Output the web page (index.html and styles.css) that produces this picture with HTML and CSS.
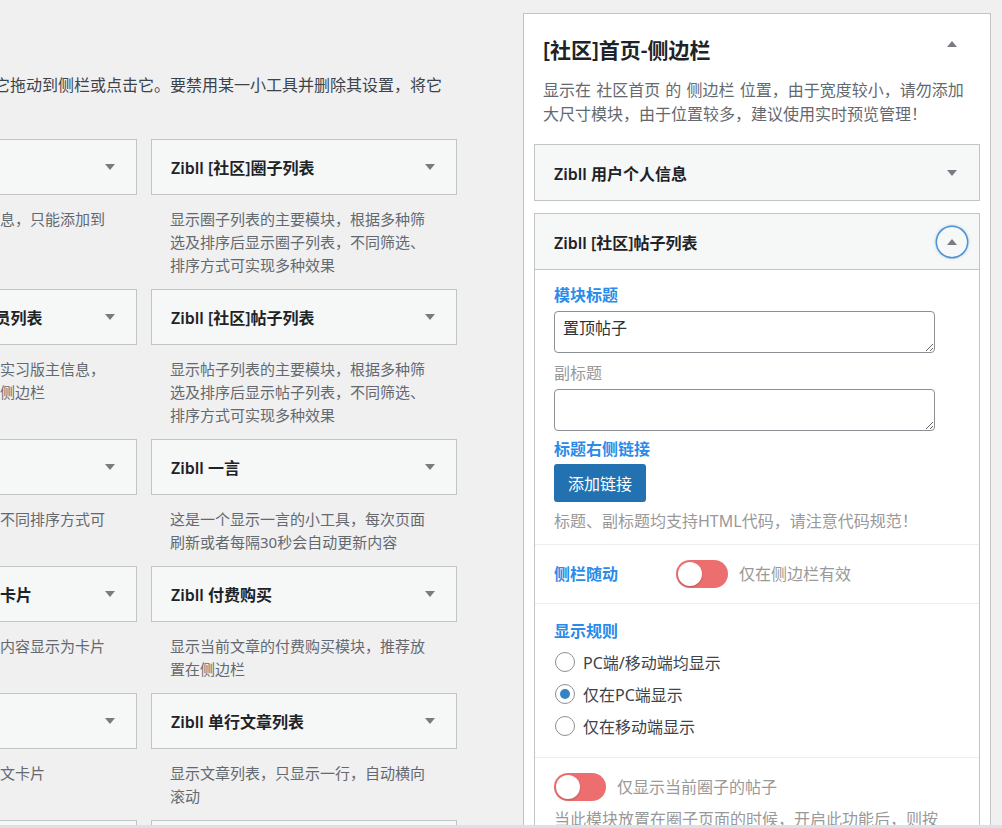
FILE: index.html
```html
<html>
  <head>
    <link rel="stylesheet" href="styles.css">
  </head>

  <body>
    <div class="page">
      <div class="widgets-left">
        <p class="intro">要启用小工具，请将它拖动到侧栏或点击它。要禁用某一小工具并删除其设置，将它拖回来。</p>

        <div class="widget-grid">
          <div class="widget">
            <div class="widget-top"><h3>Zibll 用户信息</h3><span class="arrow"></span></div>
            <p class="widget-desc">显示当前用户的个人信息，只能添加到侧边栏</p>
          </div>
          <div class="widget">
            <div class="widget-top"><h3>Zibll [社区]圈子列表</h3><span class="arrow"></span></div>
            <p class="widget-desc">显示圈子列表的主要模块，根据多种筛选及排序后显示圈子列表，不同筛选、排序方式可实现多种效果</p>
          </div>

          <div class="widget">
            <div class="widget-top"><h3>Zibll [社区]版主及成员列表</h3><span class="arrow"></span></div>
            <p class="widget-desc">显示圈主、分区版主、实习版主信息，建议放置在圈子页面的侧边栏</p>
          </div>
          <div class="widget">
            <div class="widget-top"><h3>Zibll [社区]帖子列表</h3><span class="arrow"></span></div>
            <p class="widget-desc">显示帖子列表的主要模块，根据多种筛选及排序后显示帖子列表，不同筛选、排序方式可实现多种效果</p>
          </div>

          <div class="widget">
            <div class="widget-top"><h3>Zibll 文章列表</h3><span class="arrow"></span></div>
            <p class="widget-desc">显示文章列表的模块，不同排序方式可实现多种效果</p>
          </div>
          <div class="widget">
            <div class="widget-top"><h3>Zibll 一言</h3><span class="arrow"></span></div>
            <p class="widget-desc">这是一个显示一言的小工具，每次页面刷新或者每隔30秒会自动更新内容</p>
          </div>

          <div class="widget">
            <div class="widget-top"><h3>Zibll 显示文章为图文卡片</h3><span class="arrow"></span></div>
            <p class="widget-desc">将指定的文章或页面的内容显示为卡片</p>
          </div>
          <div class="widget">
            <div class="widget-top"><h3>Zibll 付费购买</h3><span class="arrow"></span></div>
            <p class="widget-desc">显示当前文章的付费购买模块，推荐放置在侧边栏</p>
          </div>

          <div class="widget">
            <div class="widget-top"><h3>Zibll 图文卡片</h3><span class="arrow"></span></div>
            <p class="widget-desc">显示一篇指定文章为图文卡片</p>
          </div>
          <div class="widget">
            <div class="widget-top"><h3>Zibll 单行文章列表</h3><span class="arrow"></span></div>
            <p class="widget-desc">显示文章列表，只显示一行，自动横向滚动</p>
          </div>

          <div class="widget">
            <div class="widget-top"><h3>Zibll 幻灯片</h3><span class="arrow"></span></div>
          </div>
          <div class="widget">
            <div class="widget-top"><h3>Zibll 文章轮播</h3><span class="arrow"></span></div>
          </div>
        </div>
      </div>

      <div class="sidebar-panel">
        <div class="panel-head">
          <h2>[社区]首页-侧边栏</h2>
          <span class="toggle-btn"><span class="arrow up"></span></span>
        </div>
        <p class="panel-desc">显示在 社区首页 的 侧边栏 位置，由于宽度较小，请勿添加大尺寸模块，由于位置较多，建议使用实时预览管理！</p>

        <div class="widget in-sidebar">
          <div class="widget-top">
            <h3>Zibll 用户个人信息</h3>
            <span class="toggle-btn"><span class="arrow"></span></span>
          </div>
        </div>

        <div class="widget in-sidebar open">
          <div class="widget-top">
            <h3>Zibll [社区]帖子列表</h3>
            <span class="toggle-btn focus"><span class="arrow up"></span></span>
          </div>
          <div class="widget-inside">
            <div class="field">
              <div class="field-title">模块标题</div>
              <textarea class="text-input">置顶帖子</textarea>
              <div class="sub-title">副标题</div>
              <textarea class="text-input"></textarea>
              <div class="field-title link-title">标题右侧链接</div>
              <button class="button-primary">添加链接</button>
              <p class="field-help">标题、副标题均支持HTML代码，请注意代码规范！</p>
            </div>

            <div class="field field-inline">
              <div class="field-title">侧栏随动</div>
              <span class="switch"></span>
              <span class="switch-text">仅在侧边栏有效</span>
            </div>

            <div class="field">
              <div class="field-title">显示规则</div>
              <label class="radio-row"><input type="radio" name="show_type">PC端/移动端均显示</label>
              <label class="radio-row"><input type="radio" name="show_type" checked>仅在PC端显示</label>
              <label class="radio-row"><input type="radio" name="show_type">仅在移动端显示</label>
            </div>

            <div class="field">
              <div class="switch-row">
                <span class="switch"></span>
                <span class="switch-text">仅显示当前圈子的帖子</span>
              </div>
              <p class="field-help">当此模块放置在圈子页面的时候，开启此功能后，则按照当前所在的圈子显示帖子</p>
            </div>
          </div>
        </div>
      </div>
    </div>

    <div class="scroll-edge"></div>
  </body>
</html>
```

FILE: styles.css
```css
/* general styling */
* {
  box-sizing: border-box;
  margin: 0;
  padding: 0;
}

html,
body {
  height: 100%;
}

body {
  background-color: #f0f0f1;
  color: #3c434a;
  font-family: "Noto Sans", "Noto Sans CJK SC", sans-serif;
  overflow: hidden;
}

.page {
  align-items: flex-start;
  display: flex;
  gap: 66px;
}

/* available widgets */
.widgets-left {
  flex: none;
  margin-left: -169px;
  padding-top: 73px;
  width: 626px;
}

.intro {
  font-size: 16px;
  line-height: 24px;
  margin-bottom: 18px;
  padding-left: 19px;
}

.widget-grid {
  column-gap: 14px;
  display: grid;
  grid-template-columns: 306px 306px;
}

.widget-top {
  align-items: center;
  background-color: #f6f7f7;
  border: 1px solid #c3c4c7;
  display: flex;
  height: 56px;
  justify-content: space-between;
  padding: 0 21px 0 19px;
}

.widget-top h3 {
  color: #1d2327;
  font-size: 16px;
  font-weight: 600;
  white-space: nowrap;
}

.arrow {
  border-left: 5px solid transparent;
  border-right: 5px solid transparent;
  border-top: 6px solid #787c82;
  height: 0;
  width: 0;
}

.arrow.up {
  border-bottom: 6px solid #787c82;
  border-top: 0;
}

.widget-desc {
  color: #646970;
  font-size: 15px;
  line-height: 23px;
  padding: 13px 20px 12px 19px;
}

/* sidebar */
.sidebar-panel {
  background-color: #fff;
  border: 1px solid #c3c4c7;
  flex: none;
  margin-top: 13px;
  padding: 0 10px;
  width: 468px;
}

.panel-head {
  align-items: flex-start;
  display: flex;
  justify-content: space-between;
  padding: 22px 13px 0 9px;
}

.panel-head h2 {
  color: #1d2327;
  font-size: 21px;
  font-weight: 600;
  line-height: 28px;
}

.panel-head .toggle-btn {
  margin-top: -7px;
}

.toggle-btn {
  align-items: center;
  border-radius: 50%;
  display: flex;
  height: 30px;
  justify-content: center;
  width: 30px;
}

.toggle-btn.focus {
  box-shadow: 0 0 0 1.5px #4f94d4, 0 0 3px 1px rgba(79, 148, 212, 0.6);
}

.panel-desc {
  color: #646970;
  font-size: 16px;
  line-height: 24px;
  margin: 14px 10px 18px 9px;
  word-spacing: 1px;
}

.widget.in-sidebar {
  border: 1px solid #c3c4c7;
  margin-bottom: 12px;
}

.in-sidebar .widget-top {
  border: 0;
  height: 55px;
  padding: 0 12px 0 19px;
}

.widget-inside {
  border-top: 1px solid #c3c4c7;
}

/* form fields */
.field {
  padding: 13px 20px 11px 19px;
}

.field + .field {
  border-top: 1px solid #eee;
  padding-bottom: 15px;
  padding-top: 15px;
}

.field-title {
  color: #2a8be8;
  font-size: 16px;
  font-weight: 600;
  line-height: 24px;
}

.sub-title {
  color: #999;
  font-size: 16px;
  line-height: 24px;
  margin-top: 8px;
}

.text-input {
  border: 1px solid #8c8f94;
  border-radius: 4px;
  color: #2c3338;
  display: block;
  font-family: inherit;
  font-size: 16px;
  height: 42px;
  line-height: 24px;
  margin-top: 4px;
  padding: 4px 8px;
  width: 94%;
}

.link-title {
  margin-top: 6px;
}

.button-primary {
  background-color: #2271b1;
  border: 0;
  border-radius: 3px;
  color: #fff;
  font-family: inherit;
  font-size: 16px;
  height: 38px;
  margin-top: 3px;
  padding: 0 14px;
}

.field-help {
  color: #999;
  font-size: 16px;
  line-height: 24px;
  margin-top: 7px;
}

.field-inline {
  align-items: center;
  display: flex;
}

.field-inline .field-title {
  width: 122px;
}

.switch {
  background-color: #ec6e6e;
  border-radius: 14px;
  display: inline-block;
  flex: none;
  height: 28px;
  position: relative;
  width: 52px;
}

.switch::after {
  background-color: #fff;
  border-radius: 50%;
  box-shadow: 0 1px 2px rgba(0, 0, 0, 0.2);
  content: "";
  height: 24px;
  left: 2px;
  position: absolute;
  top: 2px;
  width: 24px;
}

.switch-text {
  color: #999;
  font-size: 16px;
  line-height: 24px;
  margin-left: 11px;
}

.switch-row {
  align-items: center;
  display: flex;
}

.switch-row + .field-help {
  margin-right: 10px;
  margin-top: 6px;
}

.radio-row {
  align-items: center;
  display: flex;
  font-size: 16px;
  height: 32px;
}

.field-title + .radio-row {
  margin-top: 3px;
}

.radio-row input {
  appearance: none;
  background-color: #fff;
  border: 1px solid #8c8f94;
  border-radius: 50%;
  height: 20px;
  margin: 0 8px 0 1px;
  position: relative;
  width: 20px;
}

.radio-row input:checked::before {
  background-color: #3582c4;
  border-radius: 50%;
  content: "";
  height: 10px;
  left: 4px;
  position: absolute;
  top: 4px;
  width: 10px;
}

.scroll-edge {
  background-color: #dde1e5;
  bottom: 0;
  height: 3px;
  left: 0;
  position: fixed;
  right: 0;
}
```
